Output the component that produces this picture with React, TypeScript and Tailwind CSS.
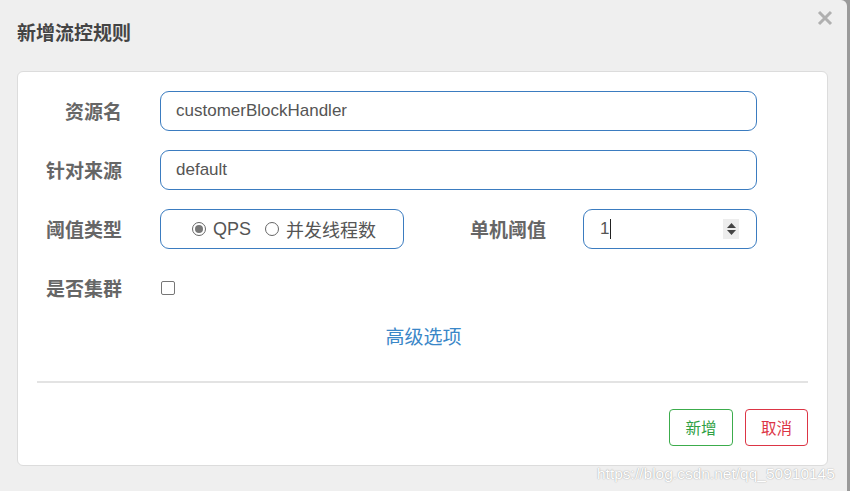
import { useState } from 'react';

const cjk = '"Noto Sans CJK SC", "Liberation Sans", sans-serif';
const latin = '"Liberation Sans", "Noto Sans CJK SC", sans-serif';

function Label({ text, width = 'w-[104px]' }: { text: string; width?: string }) {
  return (
    <div className={`${width} shrink-0 text-right text-[19px] font-bold text-[#666]`} style={{ fontFamily: cjk }}>
      {text}
    </div>
  );
}

function Radio({ checked, label, onClick }: { checked: boolean; label: string; onClick: () => void }) {
  return (
    <button onClick={onClick} className="flex items-center gap-[7px] text-[18px] text-[#555]">
      <span className="flex size-[14px] items-center justify-center rounded-full border border-[#666] bg-white">
        {checked && <span className="size-[8px] rounded-full bg-[#777]" />}
      </span>
      <span>{label}</span>
    </button>
  );
}

function App() {
  const [grade, setGrade] = useState<'qps' | 'thread'>('qps');
  const [cluster, setCluster] = useState(false);

  return (
    <div className="flex h-[491px] w-[850px] overflow-hidden bg-[#9a9a9a]" style={{ fontFamily: latin }}>
      <div className="relative flex-1 rounded-tr-[6px] bg-[#efefef]">
        {/* Header */}
        <div className="flex h-[71px] items-start justify-between pl-[17px] pr-[14px]">
          <h4 className="mt-[18px] text-[19px] font-bold text-[#444]" style={{ fontFamily: cjk }}>
            新增流控规则
          </h4>
          <button className="mt-[10px] text-[#b0b0b0]">
            <svg width="16" height="16" viewBox="0 0 16 16">
              <path d="M2 2 L14 14 M14 2 L2 14" stroke="currentColor" strokeWidth="3" />
            </svg>
          </button>
        </div>

        {/* Body */}
        <div className="mx-[17px] mr-[19px] rounded-[6px] border border-[#dcdcdc] bg-white pt-[19px] pb-[19px]">
          <div className="flex flex-col gap-[19px]">
            <div className="flex h-[40px] items-center gap-[38px]">
              <Label text="资源名" />
              <div className="flex h-full w-[597px] items-center rounded-[9px] border border-[#3b7cc0] px-[15px] text-[17px] text-[#555]">
                customerBlockHandler
              </div>
            </div>
            <div className="flex h-[40px] items-center gap-[38px]">
              <Label text="针对来源" />
              <div className="flex h-full w-[597px] items-center rounded-[9px] border border-[#3b7cc0] px-[15px] text-[17px] text-[#555]">
                default
              </div>
            </div>
            <div className="flex h-[40px] items-center">
              <Label text="阈值类型" />
              <div
                className="ml-[38px] flex h-full w-[244px] items-center gap-[14px] rounded-[9px] border border-[#3b7cc0] pl-[31px]"
                style={{ fontFamily: latin }}
              >
                <Radio checked={grade === 'qps'} label="QPS" onClick={() => setGrade('qps')} />
                <span style={{ fontFamily: cjk }}>
                  <Radio checked={grade === 'thread'} label="并发线程数" onClick={() => setGrade('thread')} />
                </span>
              </div>
              <Label text="单机阈值" width="w-[142px]" />
              <div className="ml-[37px] flex h-full w-[174px] items-center rounded-[9px] border border-[#3b7cc0] pl-[16px] pr-[17px] text-[17px] text-[#555]">
                <span>1</span>
                <span className="ml-[1px] h-[20px] w-px bg-[#222]" />
                <span className="ml-auto flex h-[20px] w-[16px] flex-col items-center justify-center gap-[2px] bg-[#ededed]">
                  <svg width="9" height="5" viewBox="0 0 9 5"><path d="M0 5 L4.5 0 L9 5 Z" fill="#444" /></svg>
                  <svg width="9" height="5" viewBox="0 0 9 5"><path d="M0 0 L4.5 5 L9 0 Z" fill="#444" /></svg>
                </span>
              </div>
            </div>
            <div className="flex h-[40px] items-center gap-[38px]">
              <Label text="是否集群" />
              <button
                onClick={() => setCluster(!cluster)}
                className="ml-[1px] size-[14px] rounded-[2px] border border-[#767676] bg-white"
              />
            </div>
          </div>

          <div className="mt-[10px] flex h-[36px] items-center justify-center">
            <a className="pl-[2px] text-[19px] text-[#3a87c8]" style={{ fontFamily: cjk }}>
              高级选项
            </a>
          </div>

          <div className="mx-[19px] mt-[27px] h-[2px] bg-[#e3e3e3]" />

          <div className="mt-[26px] flex justify-end gap-[12px] pr-[19px]" style={{ fontFamily: cjk }}>
            <button className="h-[37px] w-[64px] rounded-[4px] border border-[#3cac4c] text-[15.5px] text-[#2ea043]">
              新增
            </button>
            <button className="h-[37px] w-[63px] rounded-[4px] border border-[#dc3545] text-[15.5px] text-[#dc3545]">
              取消
            </button>
          </div>
        </div>

        {/* Watermark */}
        <div
          className="absolute left-[597px] top-[462px] whitespace-nowrap text-[15.5px] text-white"
          style={{ fontFamily: latin, textShadow: '0 0 1px rgba(0,0,0,0.3), 0 0 2px rgba(0,0,0,0.15)' }}
        >
          https://blog.csdn.net/qq_50910145
        </div>
      </div>
      <div className="w-[3px]" />
    </div>
  );
}

export default App;
